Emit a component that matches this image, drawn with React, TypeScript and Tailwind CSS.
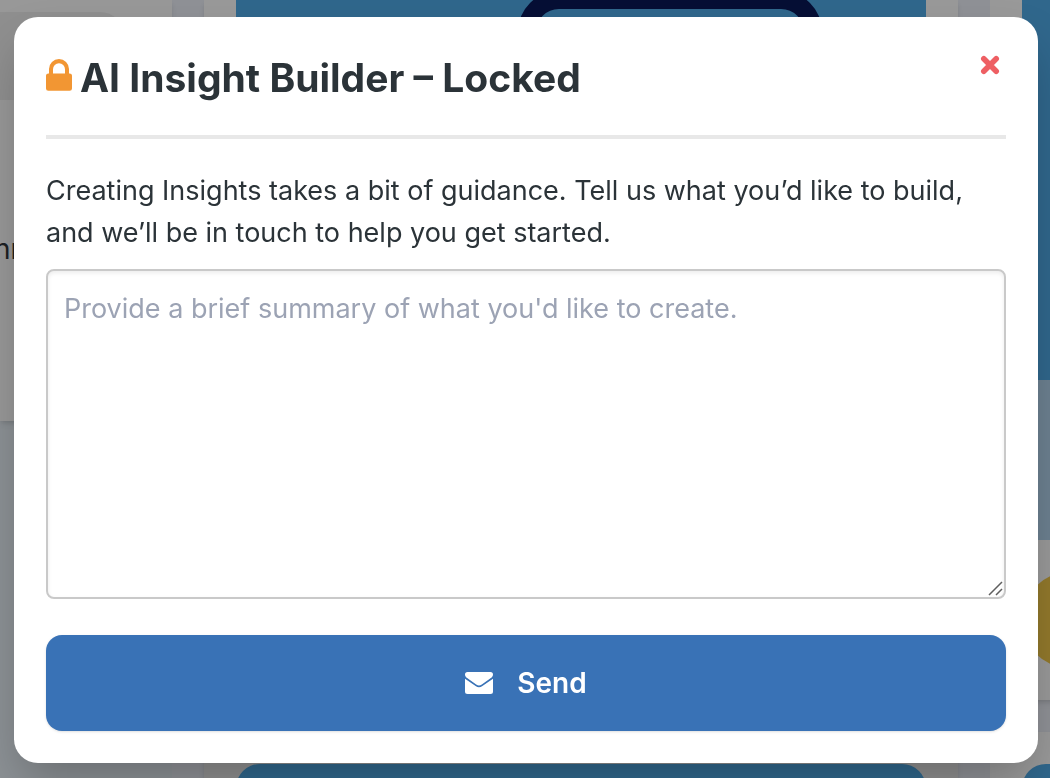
import React, { useState } from 'react';

const LockIcon: React.FC = () => (
  <svg viewBox="0 0 26 32" className="w-[26px] h-8 mt-2.5 self-start shrink-0" aria-hidden="true">
    <path
      fill="#f29633"
      d="M3 14.500V10a10 10 0 0 1 20 0v4.500h.6A2.400 2.400 0 0 1 26 17v12.400A2.400 2.400 0 0 1 23.600 31.800H2.400A2.400 2.400 0 0 1 0 29.400V17a2.400 2.400 0 0 1 2.400-2.500zm4 0h12V10.200a6 6 0 0 0-12 0z"
    />
  </svg>
);

const CloseIcon: React.FC = () => (
  <svg viewBox="0 0 20 20" className="size-5" aria-hidden="true">
    <path d="M3.800 3.800 16.200 16.200M16.200 3.800 3.800 16.200" stroke="#ee5f63" strokeWidth="5.600" strokeLinecap="round" />
  </svg>
);

const EnvelopeIcon: React.FC = () => (
  <svg viewBox="0 0 28 22" className="w-7 h-[22px]" fill="currentColor" aria-hidden="true">
    <path d="M2.500 0h23A2.500 2.500 0 0 1 28 2.500c0 1.400-.7 2.500-1.800 3.300l-9.400 6.600c-1.900 1.400-3.700 1.400-5.600 0L1.800 5.800C.7 5 0 3.900 0 2.500A2.500 2.500 0 0 1 2.500 0z" />
    <path d="M0 6.800 10.600 14c2.300 1.600 4.500 1.600 6.800 0L28 6.800v12.700a2.500 2.500 0 0 1-2.500 2.500h-23A2.500 2.500 0 0 1 0 19.500z" />
  </svg>
);

const GripIcon: React.FC = () => (
  <svg viewBox="0 0 16 16" className="absolute right-0.5 bottom-0.5 size-4 pointer-events-none" aria-hidden="true">
    <path d="M1 14 14 1M8 14l6-6" stroke="#5f5f5f" strokeWidth="1.500" />
  </svg>
);

const Dashboard: React.FC = () => (
  <div className="h-full flex gap-8 overflow-hidden bg-[#8f9196]" aria-hidden="true">
    <div className="w-[172px] shrink-0 bg-[#8c9195]">
      <div className="h-[421px] bg-[#989898] rounded-br-lg shadow-md overflow-hidden">
        <div className="h-3" />
        <div className="w-[124px] h-[88px] bg-[#8f8f8f] rounded-tr-3xl" />
        <div className="pt-32 -ml-1.5 text-[28px] leading-[42px] text-[#1c2023]">nn</div>
      </div>
    </div>

    <div className="flex-1 flex flex-col gap-8">
      <div className="h-[700px] shrink-0 px-8 bg-[#999999] shadow-md">
        <div className="h-[380px] bg-[#30678c]">
          <svg viewBox="0 0 690 380" className="w-full h-full">
            <rect x="291" y="0" width="286" height="420" rx="32" fill="#30678c" stroke="#060f35" strokeWidth="18" />
          </svg>
        </div>
      </div>
      <div className="flex-1 px-8 pt-8 bg-[#8f8f8f] shadow-md">
        <div className="h-48 rounded-t-3xl bg-[#30678c]" />
      </div>
    </div>

    <div className="w-[60px] shrink-0 flex flex-col gap-8 overflow-hidden">
      <div className="h-[700px] w-96 shrink-0 pl-8 bg-[#999999] shadow-md">
        <div className="h-[380px] bg-[#30678c]" />
        <div className="h-40 rounded-b-lg bg-[#6c8090]" />
        <div className="mt-8 size-24 rounded-full bg-[#92792c]" />
      </div>
      <div className="flex-1 w-96 pl-8 pt-8 bg-[#999999] shadow-md">
        <div className="h-48 rounded-t-3xl bg-[#30678c]" />
      </div>
    </div>
  </div>
);

export default function App() {
  const [summary, setSummary] = useState('');

  return (
    <div className="h-screen overflow-hidden font-['Inter',sans-serif] text-[#2b3338]">
      <Dashboard />

      <div className="fixed inset-0 flex items-center justify-center pt-[17px] pb-[15px] pl-[14px] pr-3">
        <div
          role="dialog"
          aria-modal="true"
          aria-labelledby="dialog-title"
          className="w-full max-w-5xl p-8 bg-white rounded-3xl shadow-[0_24px_48px_-8px_rgba(0,0,0,0.25)]"
        >
          <div className="flex items-start justify-between pb-7 border-b-4 border-[#e8e8e8]">
            <h2 id="dialog-title" className="flex items-center gap-2 text-[39px] leading-[58px] font-bold">
              <LockIcon />
              AI Insight Builder – Locked
            </h2>
            <button type="button" aria-label="Close" className="size-8 flex items-center justify-center">
              <CloseIcon />
            </button>
          </div>

          <form onSubmit={(e) => e.preventDefault()}>
            <label htmlFor="summary" className="block mt-[31px] text-[27px] leading-[42px]">
              Creating Insights takes a bit of guidance. Tell us what you’d like to build, and we’ll be in touch to help you get started.
            </label>
            <div className="relative mt-[15px]">
              <textarea
                id="summary"
                value={summary}
                onChange={(e) => setSummary(e.target.value)}
                placeholder="Provide a brief summary of what you'd like to create."
                className="block w-full h-[330px] px-4 py-[17px] text-[27px] leading-[42px] bg-white border-2 border-[#c9c9c9] rounded-lg resize-none placeholder:text-[#9ca3b4] shadow-[inset_0_2px_4px_rgba(0,0,0,0.08)]"
              />
              <GripIcon />
            </div>
            <button
              type="submit"
              className="w-full h-24 mt-9 flex items-center justify-center gap-6 rounded-2xl bg-[#3972b6] text-white text-[28px] font-semibold shadow-sm"
            >
              <EnvelopeIcon />
              Send
            </button>
          </form>
        </div>
      </div>
    </div>
  );
}
